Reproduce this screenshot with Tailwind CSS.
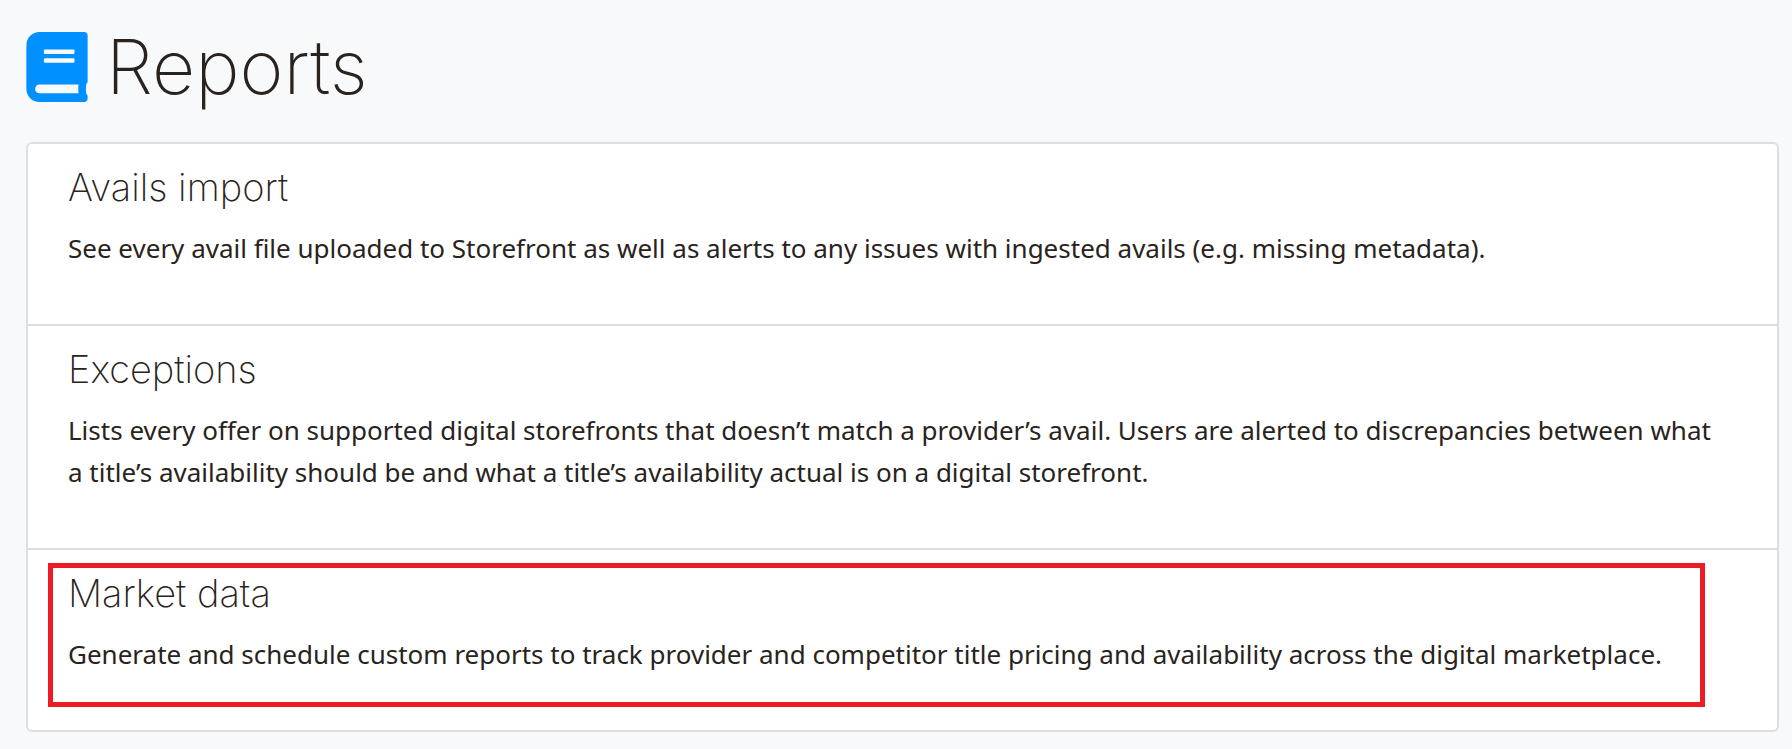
<!DOCTYPE html>
<html lang="en">
<head>
<meta charset="utf-8">
<meta name="viewport" content="width=device-width, initial-scale=1">
<title>Reports</title>
<script src="https://cdn.jsdelivr.net/npm/@tailwindcss/browser@4"></script>
</head>
<body class="min-h-screen bg-[#f8f9fb] font-['Noto_Sans','Open_Sans',sans-serif] text-[#292320]">
<main class="pt-6 pr-[13px] pb-4 pl-[26px]">
  <header class="mb-8 flex items-center gap-[18px]">
    <svg class="h-[70px] w-[62px] shrink-0 text-[#0090ff]" viewBox="0 0 448 512" fill="currentColor" aria-hidden="true"><path d="M448 360V24c0-13.3-10.7-24-24-24H96C43 0 0 43 0 96v320c0 53 43 96 96 96h328c13.3 0 24-10.7 24-24v-16c0-7.5-3.5-14.3-8.9-18.7-4.2-15.4-4.2-59.3 0-74.7 5.4-4.3 8.9-11.1 8.9-18.6zM128 134c0-3.3 2.7-6 6-6h212c3.3 0 6 2.7 6 6v20c0 3.3-2.7 6-6 6H134c-3.3 0-6-2.7-6-6v-20zm0 64c0-3.3 2.7-6 6-6h212c3.3 0 6 2.7 6 6v20c0 3.3-2.7 6-6 6H134c-3.3 0-6-2.7-6-6v-20zm253.4 250H96c-17.7 0-32-14.3-32-32 0-17.6 14.4-32 32-32h285.4c-1.9 17.1-1.9 46.9 0 64z"/></svg>
    <h1 class="font-[Inter,sans-serif] text-[75px] leading-[86px] font-extralight">Reports</h1>
  </header>
  <div class="divide-y-2 divide-[#dedede] rounded-md border-2 border-[#dedede] bg-white">
    <section class="px-10 pt-[22px] pb-[55px]">
      <h2 class="mb-[19px] font-[Inter,sans-serif] text-[38px] leading-[42px] font-extralight">Avails import</h2>
      <p class="text-[26px] leading-[42px]">See every avail file uploaded to Storefront as well as alerts to any issues with ingested avails (e.g. missing metadata).</p>
    </section>
    <section class="px-10 pt-[22px] pb-[55px]">
      <h2 class="mb-[19px] font-[Inter,sans-serif] text-[38px] leading-[42px] font-extralight">Exceptions</h2>
      <p class="text-[26px] leading-[42px]">Lists every offer on supported digital storefronts that doesn’t match a provider’s avail. Users are alerted to discrepancies between what a&nbsp;title’s availability should be and what a title’s availability actual is on a digital storefront.</p>
    </section>
    <section class="relative px-10 pt-[22px] pb-[55px]">
      <h2 class="mb-[19px] font-[Inter,sans-serif] text-[38px] leading-[42px] font-extralight">Market data</h2>
      <p class="text-[26px] leading-[42px]">Generate and schedule custom reports to track provider and competitor title pricing and availability across the digital marketplace.</p>
      <div class="pointer-events-none absolute top-[13px] right-[72px] bottom-[23px] left-5 border-5 border-[#ed1c24]"></div>
    </section>
  </div>
</main>
</body>
</html>
